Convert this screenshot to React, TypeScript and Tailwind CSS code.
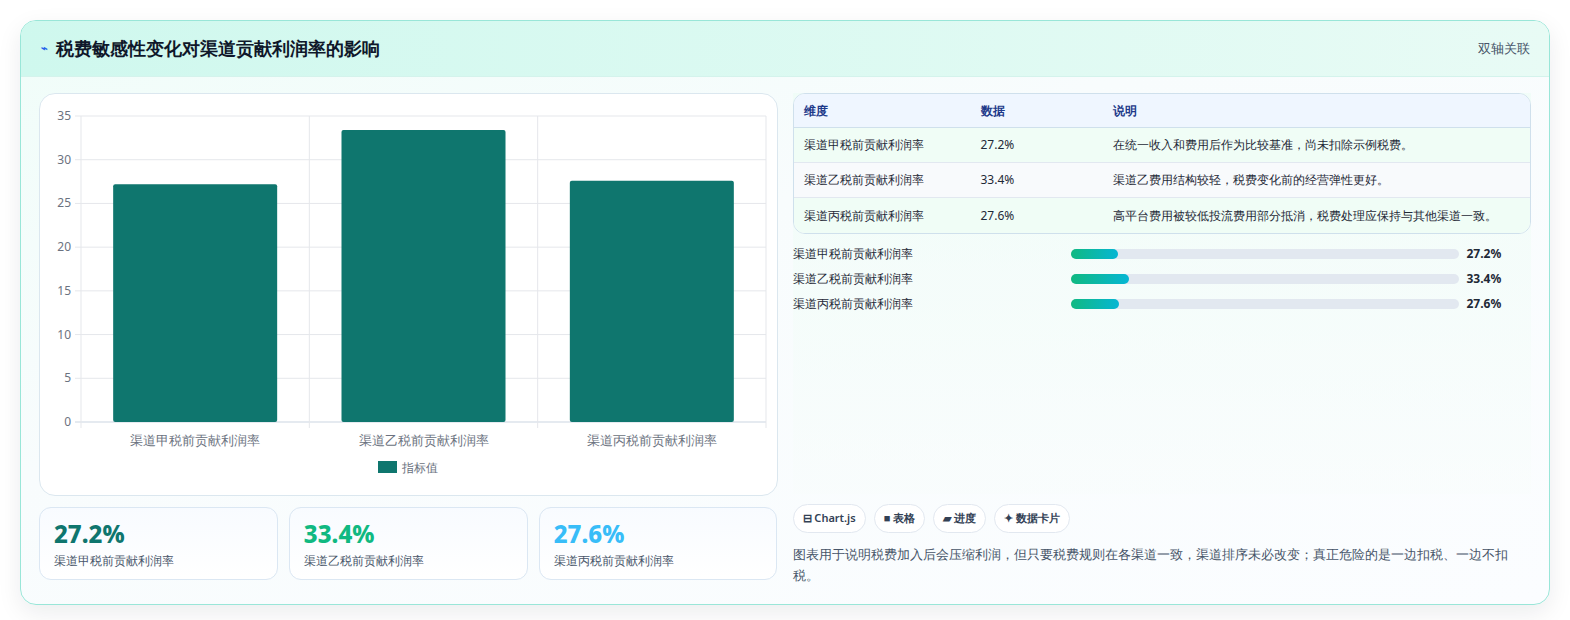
const rows = [
  { name: '渠道甲税前贡献利润率', value: 27.2, note: '在统一收入和费用后作为比较基准，尚未扣除示例税费。' },
  { name: '渠道乙税前贡献利润率', value: 33.4, note: '渠道乙费用结构较轻，税费变化前的经营弹性更好。' },
  { name: '渠道丙税前贡献利润率', value: 27.6, note: '高平台费用被较低投流费用部分抵消，税费处理应保持与其他渠道一致。' },
]

const statColors = ['text-[#0f766e]', 'text-[#10b981]', 'text-[#38bdf8]']

function BarChart() {
  const top = 22, bottom = 328, left = 41, right = 726
  const h = bottom - top
  const colW = (right - left) / 3
  const ticks = [0, 5, 10, 15, 20, 25, 30, 35]
  return (
    <svg width="737" height="402" className="block">
      {ticks.map(t => {
        const y = bottom - (t / 35) * h
        return (
          <g key={t}>
            <line x1={left - 6} x2={right} y1={y} y2={y} stroke={t === 0 ? '#cbd5e1' : '#e5e7eb'} />
            <text x={left - 10} y={y + 4} textAnchor="end" fontSize="12" fill="#6b7280">{t}</text>
          </g>
        )
      })}
      {[0, 1, 2, 3].map(i => (
        <line key={i} x1={left + colW * i} x2={left + colW * i} y1={top} y2={bottom + 6} stroke="#e5e7eb" />
      ))}
      {rows.map((r, i) => {
        const bh = (r.value / 35) * h
        const x = left + colW * i + (colW - 164) / 2
        return (
          <g key={r.name}>
            <rect x={x} y={bottom - bh} width="164" height={bh} rx="2" fill="#0f766e" />
            <text x={left + colW * i + colW / 2} y={bottom + 23} textAnchor="middle" fontSize="13" fill="#6b7280">{r.name}</text>
          </g>
        )
      })}
      <rect x="338" y="367" width="19" height="12" fill="#0f766e" />
      <text x="362" y="378" fontSize="12" fill="#6b7280">指标值</text>
    </svg>
  )
}

export default function App() {
  return (
    <div className="min-h-[620px] bg-white px-5 py-5 font-['Noto_Sans','Noto_Sans_CJK_SC',sans-serif]">
      <div className="overflow-hidden rounded-2xl border border-[#99e6d8] bg-[linear-gradient(160deg,#f0fdf9,#f8fcfd_40%,#fbfdff)] shadow-[0_8px_24px_rgba(15,23,42,0.08)]">
        <div className="flex h-[56px] items-center justify-between border-b border-[#d4f3ec] bg-[linear-gradient(90deg,#cff8ee,#e8fbf5)] pl-[20px] pr-[19px]">
          <h2 className="flex items-center gap-2 text-[18px] font-bold text-[#0f172a]">
            <span className="text-[11px] text-[#2563eb]">⌁</span>
            税费敏感性变化对渠道贡献利润率的影响
          </h2>
          <span className="text-[13px] text-[#475569]">双轴关联</span>
        </div>
        <div className="grid grid-cols-2 gap-[15px] px-[18px] pb-[18px] pt-[16px]">
          <div className="flex flex-col gap-[11px]">
            <div className="h-[403px] rounded-2xl border border-[#dbe7ef] bg-white">
              <BarChart />
            </div>
            <div className="grid grid-cols-3 gap-[11px]">
              {rows.map((r, i) => (
                <div key={r.name} className="h-[73px] rounded-xl border border-[#dbe7f3] bg-[linear-gradient(180deg,#f8fbff,#ffffff)] px-[14px] pt-[10px]">
                  <div className={`text-[24px] font-extrabold leading-[32px] ${statColors[i]}`}>{r.value}%</div>
                  <div className="mt-[2px] text-[12px] text-[#475569]">{r.name}</div>
                </div>
              ))}
            </div>
          </div>
          <div className="flex flex-col">
            <div className="bg-[linear-gradient(180deg,rgba(236,253,245,0.6),rgba(248,253,251,0.4))] pb-[10px]">
              <div className="overflow-hidden rounded-xl border border-[#cfe0ec] bg-white text-[12px]">
                <div className="flex h-[34px] items-center border-b border-[#cfe0ec] bg-[#eff6ff] font-semibold text-[#1e3a8a]">
                  <div className="w-[187px] pl-[10px]">维度</div>
                  <div className="w-[132px]">数据</div>
                  <div>说明</div>
                </div>
                {rows.map((r, i) => (
                  <div key={r.name} className={`flex h-[35px] items-center text-[#1f2937] ${i < 2 ? 'border-b border-[#e2e8f0]' : ''} ${i === 1 ? 'bg-[#f8fafc]' : 'bg-[#f0fdf6]'}`}>
                    <div className="w-[187px] pl-[10px]">{r.name}</div>
                    <div className="w-[132px]">{r.value}%</div>
                    <div>{r.note}</div>
                  </div>
                ))}
              </div>
              <div className="mt-[11px] flex flex-col gap-[7px] text-[12px] text-[#1f2937]">
                {rows.map(r => (
                  <div key={r.name} className="flex h-[18px] items-center">
                    <div className="w-[278px]">{r.name}</div>
                    <div className="h-[10px] w-[388px] rounded-full bg-[#e2e8f0]">
                      <div className="h-full rounded-full bg-[linear-gradient(90deg,#10b981,#06b6d4)]" style={{ width: `${r.value * 0.45}%` }} />
                    </div>
                    <div className="ml-[8px] font-bold">{r.value}%</div>
                  </div>
                ))}
              </div>
              <div className="h-[171px]" />
            </div>
            <div className="mt-[10px] flex gap-[8px] text-[11px] font-semibold text-[#334155]">
              {['⊟ Chart.js', '■ 表格', '▰ 进度', '✦ 数据卡片'].map(c => (
                <span key={c} className="rounded-full border border-[#e2e8f0] bg-white px-[9px] py-[5px]">{c}</span>
              ))}
            </div>
            <p className="mt-[11px] text-[13px] leading-[21px] text-[#475569]">
              图表用于说明税费加入后会压缩利润，但只要税费规则在各渠道一致，渠道排序未必改变；真正危险的是一边扣税、一边不扣税。
            </p>
          </div>
        </div>
      </div>
    </div>
  )
}
